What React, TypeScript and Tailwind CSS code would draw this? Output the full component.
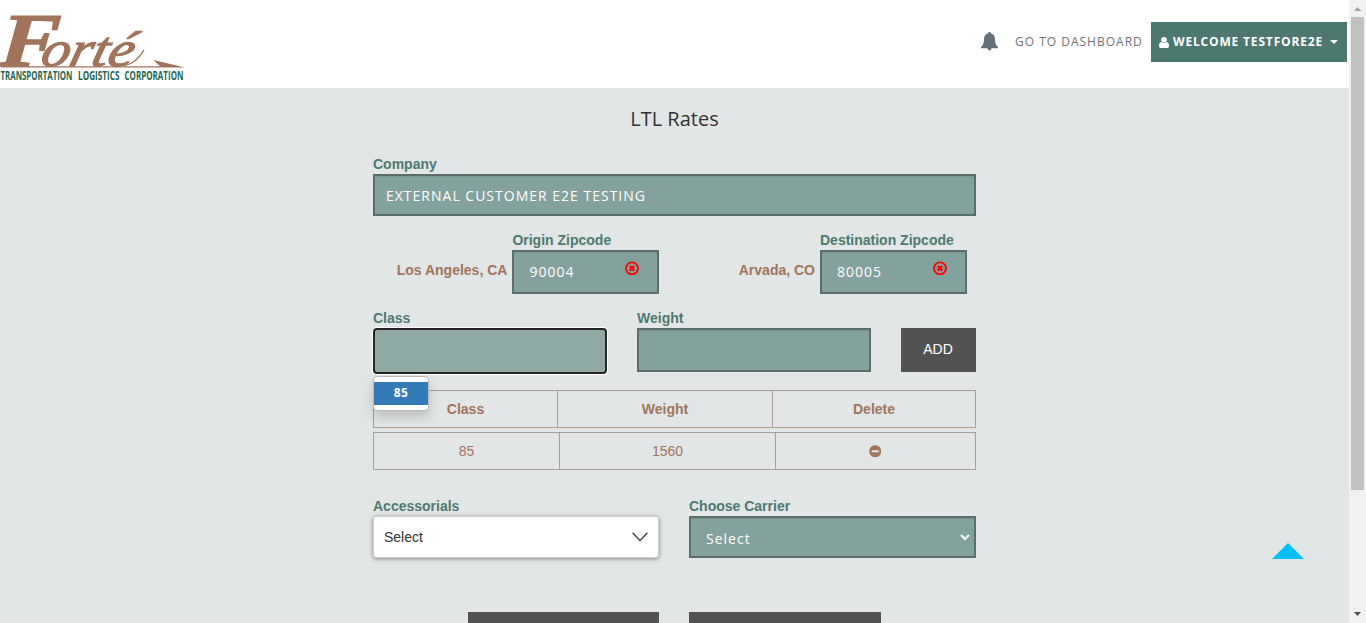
import type { ReactNode } from "react";
import { FaMinusCircle } from "react-icons/fa";

const sans = "font-['Liberation_Sans',Arial,sans-serif]";
const open = "font-['Open_Sans',sans-serif]";
const field = "border-2 border-[#5a6f69] bg-[#84a29d] shadow-[inset_0_1px_1px_rgba(0,0,0,0.075)]";

function Logo() {
  return (
    <svg width="187" height="88" viewBox="0 0 187 88" className="block shrink-0 overflow-visible">
      <text transform="translate(0 66) skewX(-4)" x="-1.500" y="0" fontFamily="Liberation Serif, serif" fontSize="76" fontWeight="700" fontStyle="italic" fill="#a1745b" stroke="#a1745b" strokeWidth="1.4" textLength="60" lengthAdjust="spacingAndGlyphs">F</text>
      <text transform="translate(0 66) skewX(-14)" x="39" y="0" fontFamily="Liberation Serif, serif" fontSize="50" fontStyle="italic" fill="#a1745b" stroke="#a1745b" strokeWidth="1.2" textLength="92" lengthAdjust="spacingAndGlyphs">orté</text>
      <path d="M123 65.500c9-.5 16-7 21-15.500" fill="none" stroke="#a1745b" strokeWidth="1.300" />
      <path d="M1 66.200H160L153.500 60L185 67.400H1Z" fill="#a1745b" />
      <g fontFamily="Open Sans, sans-serif" fontSize="12.200" fontWeight="700" fill="#1d6550">
        <text x="0.500" y="79.500" textLength="72" lengthAdjust="spacingAndGlyphs">TRANSPORTATION</text>
        <text x="78" y="79.500" textLength="41.500" lengthAdjust="spacingAndGlyphs">LOGISTICS</text>
        <text x="124.500" y="79.500" textLength="59" lengthAdjust="spacingAndGlyphs">CORPORATION</text>
      </g>
    </svg>
  );
}

function Label({ children }: { children: ReactNode }) {
  return <label className="block h-5 whitespace-nowrap text-sm leading-5 font-bold text-[#4c7a70]">{children}</label>;
}

function ClearIcon() {
  return (
    <svg width="14" height="14" viewBox="0 0 14 14" className="mt-[9px]">
      <circle cx="7" cy="7.300" r="6" fill="none" stroke="#f00" strokeWidth="1.8" />
      <path d="M4.700 5l4.600 4.600M9.300 5l-4.600 4.600" stroke="#f00" strokeWidth="2.4" />
    </svg>
  );
}

function Zip({ label, city, zip }: { label: string; city: string; zip: string }) {
  return (
    <div className="flex items-end justify-end gap-[5px]">
      <div className="pb-[14px] text-sm leading-5 font-bold whitespace-nowrap text-[#a1745b]">{city}</div>
      <div className="w-[147px] shrink-0">
        <Label>{label}</Label>
        <div className={`flex h-11 justify-between pr-[18px] pl-[15px] ${field}`}>
          <span className={`text-sm leading-10 tracking-[1px] text-white ${open}`}>{zip}</span>
          <ClearIcon />
        </div>
      </div>
    </div>
  );
}

export default function App() {
  return (
    <div className={`flex h-[623px] w-[1366px] overflow-hidden bg-[#e2e6e6] ${sans}`}>
      <div className="w-[1349px] shrink-0">
        <header className="flex h-[88px] justify-between bg-white">
          <Logo />
          <nav className={`flex h-10 items-center mt-[22px] mr-[2px] ${open}`}>
            <svg width="17" height="19" viewBox="0 0 17 19" className="mr-[17px] mb-[2px]" fill="#667078">
              <path d="M7.200 1.300a1.300 1.300 0 0 1 2.600 0C13 2.200 14 4.500 14 7c0 4 1 6.500 3 8v1.300H0V15c2-1.500 3-4 3-8C3 4.500 4 2.200 7.200 1.300ZM6.500 16h4c0 1.500-.8 2.500-2 2.500s-2-1-2-2.500Z" />
            </svg>
            <a className="w-[136px] whitespace-nowrap text-xs tracking-[1px] text-[#6d7377]">GO TO DASHBOARD</a>
            <button className="flex h-10 w-[196px] items-center bg-[#4c7870] pl-2 text-xs font-bold tracking-[0.83px] whitespace-nowrap text-white">
              <svg width="10" height="11" viewBox="0 128 1280 1536" preserveAspectRatio="none" fill="currentColor" className="mr-1">
                <path d="M1280 1399q0 109-62.500 187t-150.500 78h-854q-88 0-150.500-78t-62.500-187q0-85 8.500-160.500t31.500-152 58.500-131 94-89 134.500-34.500q131 128 313 128t313-128q76 0 134.500 34.500t94 89 58.500 131 31.500 152 8.500 160.500zM1024 512q0 159-112.500 271.500t-271.500 112.500-271.500-112.500-112.500-271.500 112.500-271.500 271.500-112.500 271.500 112.500 112.500 271.500z" />
              </svg>
              WELCOME TESTFORE2E
              <svg width="8" height="4" viewBox="0 0 8 4" className="ml-[7px]" fill="currentColor"><path d="M0 0h8L4 4z" /></svg>
            </button>
          </nav>
        </header>

        <main className="ml-[373px] w-[603px]">
          <h1 className={`h-[66px] pt-[18px] text-center text-[20px] leading-[26px] text-[#333] ${open}`}>LTL Rates</h1>

          <Label>Company</Label>
          <div className={`h-[42px] pl-[11px] text-sm leading-10 tracking-[1px] text-white ${field} ${open}`}>EXTERNAL CUSTOMER E2E TESTING</div>

          <div className="mt-[14px] grid grid-cols-[286.400px_1fr] pr-[9px]">
            <Zip label="Origin Zipcode" city="Los Angeles, CA" zip="90004" />
            <Zip label="Destination Zipcode" city="Arvada, CO" zip="80005" />
          </div>

          <div className="mt-[14px] flex h-[82px] gap-[30px]">
            <div className="relative w-[234px]">
              <Label>Class</Label>
              <div className="h-[46px] rounded-[4px] border-2 border-[#242424] bg-[#90a9a5] shadow-[0_0_0_1px_#fff]" />
              <div className="absolute top-[68px] left-0 z-10 h-[35px] w-[56px] rounded-[4px] border border-[#bbb] bg-white py-[5px] shadow-[0_6px_12px_rgba(0,0,0,0.175)]">
                <div className={`h-[23px] bg-[#337ab7] text-center text-xs leading-[22px] font-bold tracking-[0.5px] text-white ${open}`}>85</div>
              </div>
            </div>
            <div className="w-[234px]">
              <Label>Weight</Label>
              <div className={`h-11 ${field}`} />
            </div>
            <button className="mt-5 h-11 w-[75px] bg-[#525252] pr-[1px] pb-[2px] text-sm text-white">ADD</button>
          </div>

          <div className="flex h-[38px] border border-[#a89f9b] text-center text-sm leading-9 font-bold text-[#a1745b]">
            <div className="w-[184px] border-r border-[#a89f9b]">Class</div>
            <div className="w-[215px] border-r border-[#a89f9b]">Weight</div>
            <div className="flex-1">Delete</div>
          </div>
          <div className="mt-1 flex h-[38px] border border-[#a89f9b] text-center text-sm leading-9 text-[#a1745b]">
            <div className="w-[186px] border-r border-[#a89f9b]">85</div>
            <div className="w-[216px] border-r border-[#a89f9b]">1560</div>
            <div className="flex flex-1 items-center justify-center pr-[1px]">
              <FaMinusCircle size={12.5} />
            </div>
          </div>

          <div className="mt-[26px] flex gap-[30px]">
            <div className="w-[286px]">
              <Label>Accessorials</Label>
              <div className="flex h-[42px] items-center justify-between rounded-[3px] border border-[#ccc] bg-white pr-[10px] pl-[10px] text-sm text-[#333] shadow-[0_1px_4px_rgba(0,0,0,0.4)]">
                Select
                <svg width="16" height="10" viewBox="0 0 16 10" fill="none" stroke="#333" strokeWidth="1.3"><path d="M.7.8L8 8.600 15.300.8" /></svg>
              </div>
            </div>
            <div className="w-[287px]">
              <Label>Choose Carrier</Label>
              <div className={`flex h-[42px] items-center justify-between pr-1 pl-[15px] text-sm tracking-[1px] text-white ${field} ${open}`}>
                <span className="pt-1">Select</span>
                <svg width="10" height="7" viewBox="0 0 10 7" fill="none" stroke="white" strokeWidth="2"><path d="M1 1l4 4 4-4" /></svg>
              </div>
            </div>
          </div>

          <div className="mt-[54px] ml-[95px] flex gap-[30px]">
            <div className="h-11 w-[191px] bg-[#525252]" />
            <div className="h-11 w-[192px] bg-[#525252]" />
          </div>
        </main>
      </div>

      <div className="flex h-[623px] w-[17px] flex-col items-center bg-[#f1f1f1]">
        <svg width="17" height="17" viewBox="0 0 17 17" className="shrink-0" fill="#a3a3a3"><path d="M5 11h7L8.500 7z" /></svg>
        <div className="h-[473px] w-[13px] shrink-0 bg-[#c1c1c1]" />
        <svg width="17" height="17" viewBox="0 0 17 17" className="mt-auto shrink-0" fill="#505050"><path d="M5 6h7L8.500 10z" /></svg>
      </div>

      <svg width="32" height="16" viewBox="0 0 32 16" className="absolute top-[543px] left-[1272px]" fill="#00bfff"><path d="M0 16L16 0l16 16z" /></svg>
    </div>
  );
}
